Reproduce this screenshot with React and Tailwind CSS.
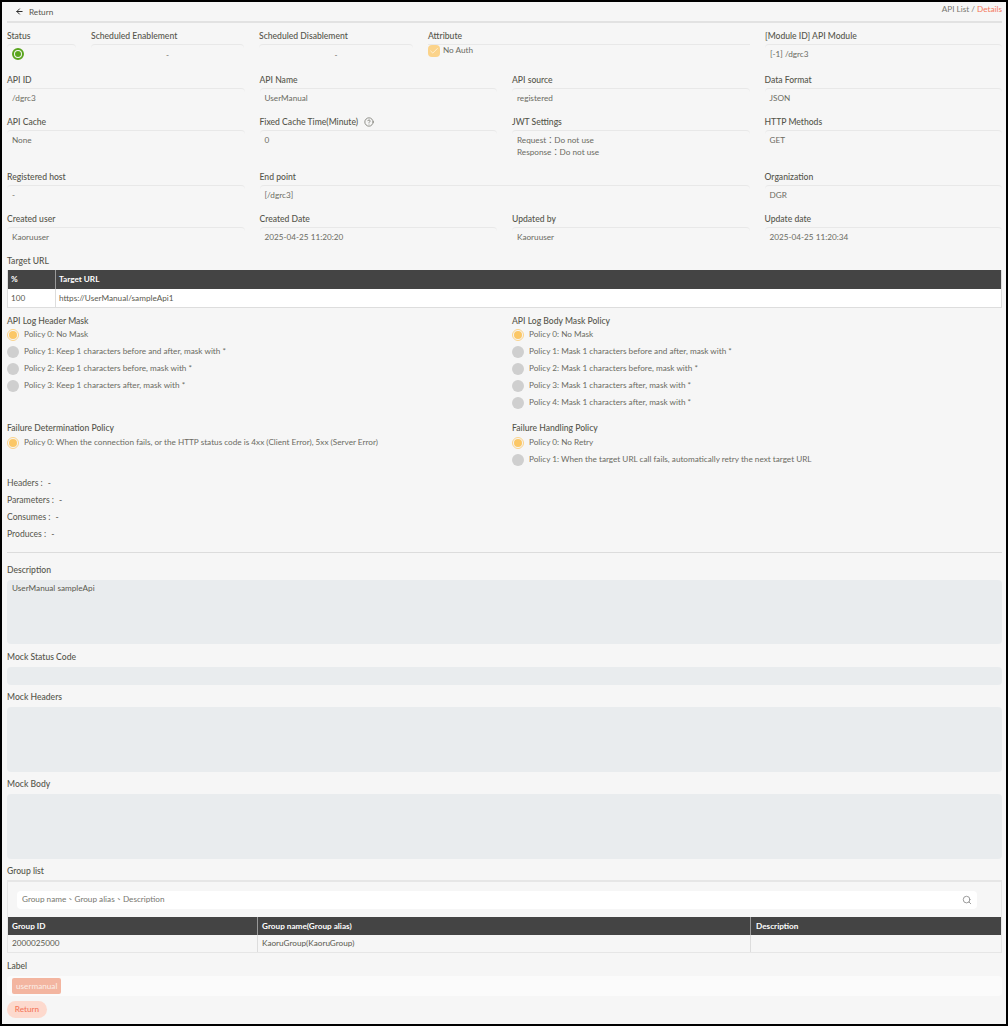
import { ArrowLeft, Check, Search, CircleHelp } from "lucide-react";

const Field = ({ label, children, className = "", center = false, help = false }) => (
  <div className={className}>
    <div className="h-[18px] pt-[1px] text-[8.6px] leading-[18px] font-medium text-[#55554b] flex items-center gap-1.5">
      {label}
      {help && <CircleHelp size={10} strokeWidth={1.5} />}
    </div>
    <div className={`border-t border-[#e8e8e8] rounded-t pt-[3px] px-[5px] text-[8.2px] leading-[12px] text-[#6b6b62] ${center ? "text-center" : ""}`}>
      {children}
    </div>
  </div>
);

const Radio = ({ on, children }) => (
  <div className="h-[17px] flex items-center gap-[5px] text-[8.2px] text-[#6b6b62]">
    {on ? (
      <span className="w-3 h-3 rounded-full border border-[#fbd38a] flex items-center justify-center shrink-0">
        <span className="w-2 h-2 rounded-full bg-[#fbc766]" />
      </span>
    ) : (
      <span className="w-3 h-3 rounded-full bg-[#cfcfcf] shrink-0" />
    )}
    {children}
  </div>
);

const Sub = ({ children }) => (
  <div className="h-[13px] text-[8.6px] leading-4 font-medium text-[#55554b]">{children}</div>
);

const Meta = ({ label }) => (
  <div className="h-[17px] flex items-center text-[8.6px] text-[#55554b] gap-[5px]">
    <span>{label} :</span>
    <span>-</span>
  </div>
);

const Box = ({ label, head, h, children }) => (
  <div>
    <div className={`${head} text-[8.6px] leading-4 text-[#55554b] font-medium`}>{label}</div>
    <div className={`${h} bg-[#e9ecee] rounded px-[5px] pt-[2px] text-[8.2px] leading-[12px] text-[#5a5a50]`}>{children}</div>
  </div>
);

const Th = ({ className = "", children }) => (
  <div className={`flex items-center text-[8.2px] font-bold text-white border-r border-[#999] last:border-r-0 ${className}`}>{children}</div>
);

const Td = ({ className = "", children }) => (
  <div className={`flex items-center text-[8.2px] text-[#5a5a50] border-r border-[#ddd] last:border-r-0 ${className}`}>{children}</div>
);

export default function App() {
  return (
    <div className="w-[1008px] h-[1026px] overflow-hidden border-2 border-black bg-[#f6f6f6] font-['Lato','Noto_Sans_CJK_TC',sans-serif]">
      <div className="pl-[5px] pr-[4px]">
        <div className="h-[21px] flex items-center justify-between border-b-2 border-[#e2e2e2]">
          <div className="flex items-center gap-[5px] pl-2 pt-[1px] text-[8.2px] text-[#55554c]">
            <ArrowLeft size={9} strokeWidth={2.5} className="text-[#222]" />
            Return
          </div>
          <div className="text-[8.2px] text-[#77776f] pb-1">
            API List / <span className="text-[#f4775a]">Details</span>
          </div>
        </div>

        <div className="flex pt-[3px] h-[47px]">
          <Field label="Status" className="w-[69px] mr-[15px]">
            <span className="block w-3 h-3 rounded-full border-2 border-[#5aa51e] p-[1px]">
              <span className="block w-full h-full rounded-full bg-[#5aa51e]" />
            </span>
          </Field>
          <Field label="Scheduled Enablement" center className="w-[153px] mr-[15px]"><span className="block pt-[1px]">-</span></Field>
          <Field label="Scheduled Disablement" center className="w-[154px] mr-[15px]"><span className="block pt-[1px]">-</span></Field>
          <div className="w-[322px] mr-[15px]">
            <div className="h-[18px] pt-[1px] text-[8.6px] leading-[18px] font-medium text-[#55554b]">Attribute</div>
            <div className="border-t border-[#e8e8e8] flex items-start gap-[3px] text-[8.2px] text-[#6b6b62]">
              <span className="w-3 h-3 rounded-sm bg-[#fbd38a] flex items-center justify-center shrink-0"><Check size={10} strokeWidth={1.5} className="text-white" /></span>
              <span className="leading-[11px]">No Auth</span>
            </div>
          </div>
          <Field label="[Module ID] API Module" className="flex-1">[-1] /dgrc3</Field>
        </div>

        <div className="grid grid-cols-4 gap-x-[15px]">
          <Field label="API ID" className="h-[42px]">/dgrc3</Field>
          <Field label="API Name" className="h-[42px]">UserManual</Field>
          <Field label="API source" className="h-[42px]">registered</Field>
          <Field label="Data Format" className="h-[42px]">JSON</Field>
          <Field label="API Cache" className="h-[55px]">None</Field>
          <Field label="Fixed Cache Time(Minute)" help className="h-[55px]">0</Field>
          <Field label="JWT Settings" className="h-[55px]">
            <div>Request：Do not use</div>
            <div>Response：Do not use</div>
          </Field>
          <Field label="HTTP Methods" className="h-[55px]">GET</Field>
          <Field label="Registered host" className="h-[42px]">-</Field>
          <Field label="End point" className="h-[42px] col-span-2">[/dgrc3]</Field>
          <Field label="Organization" className="h-[42px]">DGR</Field>
          <Field label="Created user" className="h-[43px]">Kaoruuser</Field>
          <Field label="Created Date" className="h-[43px]">2025-04-25 11:20:20</Field>
          <Field label="Updated by" className="h-[43px]">Kaoruuser</Field>
          <Field label="Update date" className="h-[43px]">2025-04-25 11:20:34</Field>
        </div>

        <div className="h-[18px] text-[8.6px] leading-[18px] font-medium text-[#55554b]">Target URL</div>
        <div className="border border-[#ddd] border-t-0">
          <div className="flex h-[19px] bg-[#444]">
            <Th className="w-[48px] pl-[3px]">%</Th>
            <Th className="flex-1 pl-[3px]">Target URL</Th>
          </div>
          <div className="flex h-[18px] bg-white">
            <Td className="w-[48px] pl-[3px]">100</Td>
            <Td className="flex-1 pl-[3px]">https://UserManual/sampleApi1</Td>
          </div>
        </div>

        <div className="grid grid-cols-2 gap-x-[15px] pt-[5px]">
          <div className="h-[107px]">
            <Sub>API Log Header Mask</Sub>
            <Radio on>Policy 0: No Mask</Radio>
            <Radio>Policy 1: Keep 1 characters before and after, mask with *</Radio>
            <Radio>Policy 2: Keep 1 characters before, mask with *</Radio>
            <Radio>Policy 3: Keep 1 characters after, mask with *</Radio>
          </div>
          <div className="h-[107px]">
            <Sub>API Log Body Mask Policy</Sub>
            <Radio on>Policy 0: No Mask</Radio>
            <Radio>Policy 1: Mask 1 characters before and after, mask with *</Radio>
            <Radio>Policy 2: Mask 1 characters before, mask with *</Radio>
            <Radio>Policy 3: Mask 1 characters after, mask with *</Radio>
            <Radio>Policy 4: Mask 1 characters after, mask with *</Radio>
          </div>
          <div className="h-[55px]">
            <div className="h-[14px] text-[8.6px] leading-4 font-medium text-[#55554b]">Failure Determination Policy</div>
            <Radio on>Policy 0: When the connection fails, or the HTTP status code is 4xx (Client Error), 5xx (Server Error)</Radio>
          </div>
          <div className="h-[55px]">
            <div className="h-[14px] text-[8.6px] leading-4 font-medium text-[#55554b]">Failure Handling Policy</div>
            <Radio on>Policy 0: No Retry</Radio>
            <Radio>Policy 1: When the target URL call fails, automatically retry the next target URL</Radio>
          </div>
        </div>

        <Meta label="Headers" />
        <Meta label="Parameters" />
        <Meta label="Consumes" />
        <Meta label="Produces" />

        <div className="mt-[9px] border-t border-[#dcdcdc]" />

        <Box label="Description" head="h-[27px] pt-[9px]" h="h-[64px]">UserManual sampleApi</Box>
        <Box label="Mock Status Code" head="h-[23px] pt-[5px]" h="h-[18px]" />
        <Box label="Mock Headers" head="h-[22px] pt-[4px]" h="h-[65px]" />
        <Box label="Mock Body" head="h-[22px] pt-[4px]" h="h-[65px]" />

        <div className="h-[21px] pt-[4px] text-[8.6px] leading-4 text-[#55554b] font-medium">Group list</div>
        <div className="border border-t-2 border-[#e6e6e6]">
          <div className="h-[35px] flex items-center pl-[9px] pr-[24px]">
            <div className="flex-1 h-[18px] bg-white rounded flex items-center justify-between px-[5px] text-[8.2px] text-[#77776f]">
              Group name、Group alias、Description
              <Search size={10} className="text-[#888]" />
            </div>
          </div>
          <div className="flex h-[18px] bg-[#444]">
            <Th className="w-[250px] pl-[4px]">Group ID</Th>
            <Th className="w-[493px] pl-[4px]">Group name(Group alias)</Th>
            <Th className="flex-1 pl-[5px]">Description</Th>
          </div>
          <div className="flex h-[17px]">
            <Td className="w-[250px] pl-[4px]">2000025000</Td>
            <Td className="w-[493px] pl-[4px]">KaoruGroup(KaoruGroup)</Td>
            <Td className="flex-1" />
          </div>
        </div>

        <div className="h-[23px] pt-[5px] text-[8.6px] leading-4 text-[#55554b] font-medium">Label</div>
        <div className="h-[20px] bg-[#fbfbfb] rounded flex items-center px-[5px]">
          <span className="h-4 px-1 flex items-center rounded-[2px] bg-[#f3b5a0] text-[8.2px] text-[#fbeee8]">usermanual</span>
        </div>
        <div className="mt-[5px] w-10 h-[17px] rounded-full bg-[#fdd9cd] flex items-center justify-center text-[8.2px] font-medium text-[#f4775a]">Return</div>
      </div>
    </div>
  );
}
